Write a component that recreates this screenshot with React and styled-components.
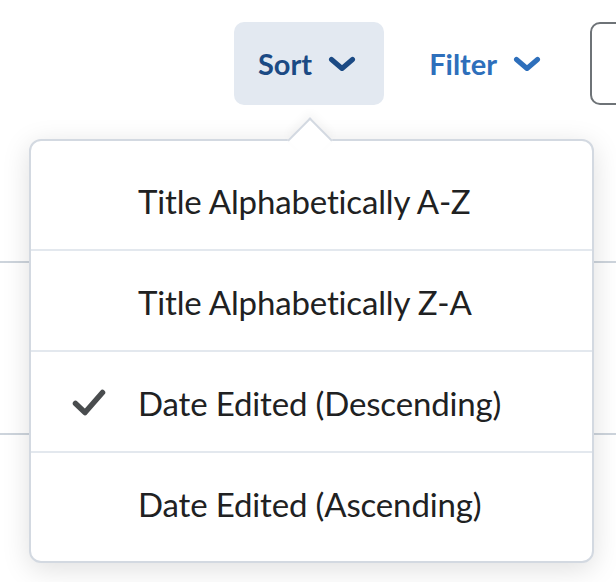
import React from "react";
import styled, { createGlobalStyle } from "styled-components";

const Global = createGlobalStyle`
  html, body {
    margin: 0;
    padding: 0;
    background: #ffffff;
    overflow: hidden;
    font-family: Lato, "Open Sans", sans-serif;
  }
`;

const Page = styled.div`
  position: relative;
  width: 616px;
  height: 582px;
  overflow: hidden;
`;

const Toolbar = styled.div`
  display: flex;
  align-items: center;
  gap: 21px;
  padding: 22px 0 0 234px;
  height: 83px;
`;

const ToolButton = styled.button`
  display: flex;
  align-items: center;
  gap: 16px;
  height: 83px;
  padding: 0 28px 0 24px;
  border: none;
  border-radius: 10px;
  background: ${(p) => (p.$active ? "#e3e9f1" : "transparent")};
  color: ${(p) => (p.$active ? "#1b4a84" : "#2e6fbb")};
  font-family: Lato, sans-serif;
  font-weight: 700;
  font-size: 29px;
  cursor: pointer;
  flex-shrink: 0;
`;

const Chevron = styled.svg`
  width: 28px;
  height: 16px;
  display: block;
`;

const SearchBox = styled.div`
  width: 120px;
  height: 79px;
  border: 2px solid #6e7377;
  border-radius: 10px;
  flex-shrink: 0;
`;

const List = styled.div`
  margin-top: 156px;
`;

const ListRow = styled.div`
  height: 170px;
  border-top: 2px solid #cdd4dc;
`;

const Menu = styled.div`
  position: absolute;
  left: 29px;
  top: 139px;
  width: 561px;
  padding: 9px 0;
  background: #ffffff;
  border: 2px solid #d3d9e1;
  border-radius: 12px;
  box-shadow: 0 6px 28px rgba(0, 0, 0, 0.13);
`;

const Pointer = styled.div`
  position: absolute;
  top: -17px;
  left: 263px;
  width: 30px;
  height: 30px;
  background: #ffffff;
  border-top: 2px solid #d3d9e1;
  border-left: 2px solid #d3d9e1;
  transform: rotate(45deg);
  box-shadow: -4px -4px 10px rgba(0, 0, 0, 0.04);
`;

const Items = styled.ul`
  position: relative;
  list-style: none;
  margin: 0;
  padding: 0;
  background: #ffffff;
  border-radius: 10px;
`;

const Item = styled.li`
  position: relative;
  display: flex;
  align-items: center;
  box-sizing: border-box;
  height: ${(p) => (p.$first ? "99px" : "101px")};
  padding: 2px 0 0 107px;
  border-top: ${(p) => (p.$first ? "none" : "2px solid #e3e8ee")};
  color: #202122;
  font-size: 33px;
  letter-spacing: -0.15px;
  font-weight: 400;
`;

const Check = styled.svg`
  position: absolute;
  left: 41px;
  top: 50%;
  margin-top: -13px;
  width: 34px;
  height: 28px;
`;

const ChevronIcon = () => (
  <Chevron viewBox="0 0 28 16" fill="none">
    <path
      d="M3.5 3.5 L14 12.5 L24.5 3.5"
      stroke="currentColor"
      strokeWidth="5"
      strokeLinecap="round"
      strokeLinejoin="round"
    />
  </Chevron>
);

const items = [
  { label: "Title Alphabetically A-Z" },
  { label: "Title Alphabetically Z-A" },
  { label: "Date Edited (Descending)", checked: true },
  { label: "Date Edited (Ascending)" },
];

export default function App() {
  return (
    <Page>
      <Global />
      <Toolbar>
        <ToolButton $active>
          Sort
          <ChevronIcon />
        </ToolButton>
        <ToolButton>
          Filter
          <ChevronIcon />
        </ToolButton>
        <SearchBox />
      </Toolbar>
      <List>
        <ListRow />
        <ListRow />
      </List>
      <Menu>
        <Pointer />
        <Items>
          {items.map((it, i) => (
            <Item key={it.label} $first={i === 0}>
              {it.checked && (
                <Check viewBox="0 0 34 28" fill="none">
                  <path
                    d="M3.5 14.5 L13 23.5 L30.5 3.5"
                    stroke="#494c4e"
                    strokeWidth="5.5"
                    strokeLinecap="round"
                    strokeLinejoin="round"
                  />
                </Check>
              )}
              {it.label}
            </Item>
          ))}
        </Items>
      </Menu>
    </Page>
  );
}
